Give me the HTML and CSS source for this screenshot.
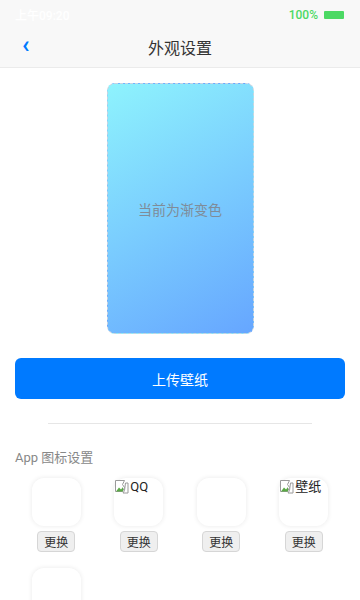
FILE: index.html
```html
<!DOCTYPE html>
<html lang="zh">
<head>
<meta charset="utf-8">
<title>外观设置</title>
<link rel="stylesheet" href="styles.css">
</head>
<body>
<div class="top">
  <div class="status">
    <span class="time">上午09:20</span>
    <span class="battery"><span class="pct">100%</span><span class="cell"></span></span>
  </div>
  <div class="nav">
    <span class="back">‹</span>
    <span class="title">外观设置</span>
  </div>
</div>
<main class="content">
  <div class="preview"><span>当前为渐变色</span></div>
  <button class="upload">上传壁纸</button>
  <div class="divider"></div>
  <div class="label">App 图标设置</div>
  <div class="grid">
    <div class="item"><div class="icon"></div><button class="change">更换</button></div>
    <div class="item"><div class="icon"><span class="broken"><svg width="16" height="16" viewBox="0 0 16 16"><path d="M1.5 1.5h9l-2 4 2 3-2 4h-7z" fill="#fff" stroke="#9a9a9a"/><path d="M2 12.5l3-4 2 2 2-2.5v4.5z" fill="#5aa845"/><path d="M11.5 4l2.5 0v10h-5l1.5-2.5z" fill="#fff" stroke="#9a9a9a"/></svg>QQ</span></div><button class="change">更换</button></div>
    <div class="item"><div class="icon"></div><button class="change">更换</button></div>
    <div class="item"><div class="icon"><span class="broken"><svg width="16" height="16" viewBox="0 0 16 16"><path d="M1.5 1.5h9l-2 4 2 3-2 4h-7z" fill="#fff" stroke="#9a9a9a"/><path d="M2 12.5l3-4 2 2 2-2.5v4.5z" fill="#5aa845"/><path d="M11.5 4l2.5 0v10h-5l1.5-2.5z" fill="#fff" stroke="#9a9a9a"/></svg>壁纸</span></div><button class="change">更换</button></div>
    <div class="item"><div class="icon"></div><button class="change">更换</button></div>
  </div>
</main>
</body>
</html>
```
FILE: styles.css
```css
* { box-sizing: border-box; }
html, body { margin: 0; padding: 0; background: #fff; }
body {
  font-family: "Helvetica Neue", Roboto, "Noto Sans CJK SC", sans-serif;
  color: #333;
  width: 360px;
}
.top {
  background: #f8f8f8;
  border-bottom: 1px solid #ebebeb;
}
.status {
  height: 27px;
  display: flex;
  justify-content: space-between;
  align-items: center;
  padding: 2px 16px 0 15px;
  font-size: 12px;
}
.time { color: #fff; font-weight: 500; }
.battery { display: flex; align-items: center; gap: 6px; }
.pct { color: #4cd964; font-weight: 500; }
.cell { width: 20px; height: 8px; background: #4cd964; border-radius: 1px; }
.nav {
  height: 40px;
  display: flex;
  align-items: center;
  justify-content: center;
  position: relative;
}
.back {
  position: absolute;
  left: 22px;
  top: 6px;
  color: #007aff;
  font-size: 24px;
  font-weight: bold;
  line-height: 24px;
}
.title { font-size: 16px; color: #333; }
.content { padding: 15px 15px 0; }
.preview {
  width: 147px;
  height: 251px;
  margin: 0 auto;
  border: 1px dashed #c8d4e0;
  border-radius: 8px;
  background: linear-gradient(150deg, #8ef3fd 0%, #66a6ff 100%);
  display: flex;
  align-items: center;
  justify-content: center;
  font-size: 14px;
  color: #7f8c99;
}
.upload {
  display: block;
  width: 100%;
  height: 41px;
  margin-top: 24px;
  border: none;
  border-radius: 6px;
  background: #007aff;
  color: #fff;
  font-family: inherit;
  font-size: 14px;
}
.divider {
  width: 80%;
  height: 1px;
  background: #e6e6e6;
  margin: 24px auto 0;
}
.label {
  margin-top: 24px;
  font-size: 13px;
  color: #888;
  line-height: 20px;
}
.grid {
  margin-top: 10px;
  display: grid;
  grid-template-columns: repeat(4, 1fr);
  row-gap: 16px;
}
.item {
  display: flex;
  flex-direction: column;
  align-items: center;
}
.icon {
  width: 49px;
  height: 48px;
  border-radius: 12px;
  background: #fff;
  box-shadow: 0 0 5px rgba(0,0,0,0.09);
  position: relative;
}
.broken {
  display: flex;
  align-items: center;
  font-size: 13px;
  color: #222;
  line-height: 16px;
  padding-top: 1px;
  white-space: nowrap;
}
.change {
  margin-top: 5px;
  height: 21px;
  padding: 0 6px;
  font-family: inherit;
  font-size: 12px;
  color: #333;
  background: #efefef;
  border: 1px solid #d6d6d6;
  border-radius: 4px;
}
```
